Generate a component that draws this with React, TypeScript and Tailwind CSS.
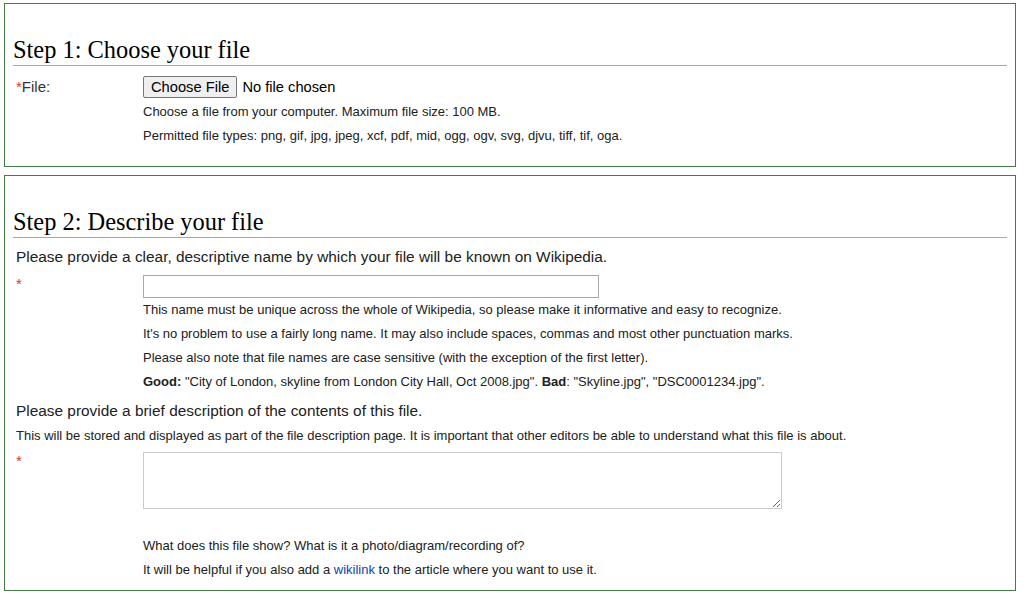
import type { ReactNode } from "react";

const sans = "font-['Liberation_Sans',Arial,sans-serif]";

function StepBox({ title, children, className }: { title: string; children: ReactNode; className?: string }) {
  return (
    <fieldset className={`border border-[#457b45] px-2 pt-[30px] ${className ?? ""}`}>
      <h2 className="border-b border-[#a2a9b1] font-['Liberation_Serif',Georgia,serif] text-[24.4px] leading-[31px] text-[#000]">
        {title}
      </h2>
      {children}
    </fieldset>
  );
}

function Row({ label, children }: { label: ReactNode; children: ReactNode }) {
  return (
    <div className="flex">
      <div className="w-[130px] shrink-0 pl-[3px]">{label}</div>
      <div className="min-w-0 flex-1">{children}</div>
    </div>
  );
}

function Req() {
  return <span className="text-[#dd3333]">*</span>;
}

function Help({ children }: { children: ReactNode }) {
  return <div className="text-[13px] leading-[24px] text-[#202122]">{children}</div>;
}

export default function App() {
  return (
    <div className={`min-h-screen w-[1020px] bg-white px-1 pt-[3px] text-[#202122] ${sans}`}>
      <StepBox title="Step 1: Choose your file" className="pb-[18px]">
        <div className="mt-[9px]">
          <Row
            label={
              <div className="pt-[1px] text-[15px] leading-[22px] text-[#333]">
                <Req />
                File:
              </div>
            }
          >
            <div className="flex items-center gap-[5px] pt-[1px] text-[14.7px]">
              <button
                type="button"
                className="h-[22px] rounded-[2px] border border-[#767676] bg-[#efefef] px-[7px] leading-[20px] text-black"
              >
                Choose File
              </button>
              <span className="text-black">No file chosen</span>
            </div>
            <div className="mt-[2px]">
              <Help>Choose a file from your computer. Maximum file size: 100 MB.</Help>
              <Help>Permitted file types: png, gif, jpg, jpeg, xcf, pdf, mid, ogg, ogv, svg, djvu, tiff, tif, oga.</Help>
            </div>
          </Row>
        </div>
      </StepBox>

      <StepBox title="Step 2: Describe your file" className="mt-2 pb-[8px]">
        <p className="mt-[8px] pl-[3px] text-[15.4px] leading-[22px]">
          Please provide a clear, descriptive name by which your file will be known on Wikipedia.
        </p>
        <div className="mt-[7px]">
          <Row label={<div className="pt-[1px] text-[15px] leading-[16px]"><Req /></div>}>
            <input type="text" className="block h-[23px] w-[456px] border border-[#a2a9b1] bg-white outline-none" />
            <Help>This name must be unique across the whole of Wikipedia, so please make it informative and easy to recognize.</Help>
            <Help>It's no problem to use a fairly long name. It may also include spaces, commas and most other punctuation marks.</Help>
            <Help>Please also note that file names are case sensitive (with the exception of the first letter).</Help>
            <Help>
              <b>Good:</b> "City of London, skyline from London City Hall, Oct 2008.jpg". <b>Bad</b>: "Skyline.jpg",
              "DSC0001234.jpg".
            </Help>
          </Row>
        </div>
        <p className="mt-[6px] pl-[3px] text-[15.4px] leading-[22px]">
          Please provide a brief description of the contents of this file.
        </p>
        <p className="mt-[2px] pl-[3px] text-[13px] leading-[24px]">
          This will be stored and displayed as part of the file description page. It is important that other editors be
          able to understand what this file is about.
        </p>
        <div className="mt-[4px]">
          <Row label={<div className="pt-[1px] text-[15px] leading-[16px]"><Req /></div>}>
            <textarea className="block h-[57px] w-[639px] resize border border-[#c8ccd1] bg-white outline-none" />
            <div className="mt-[25px]">
              <Help>What does this file show? What is it a photo/diagram/recording of?</Help>
              <Help>
                It will be helpful if you also add a <span className="text-[#0645ad]">wikilink</span> to the article where
                you want to use it.
              </Help>
            </div>
          </Row>
        </div>
      </StepBox>
    </div>
  );
}
